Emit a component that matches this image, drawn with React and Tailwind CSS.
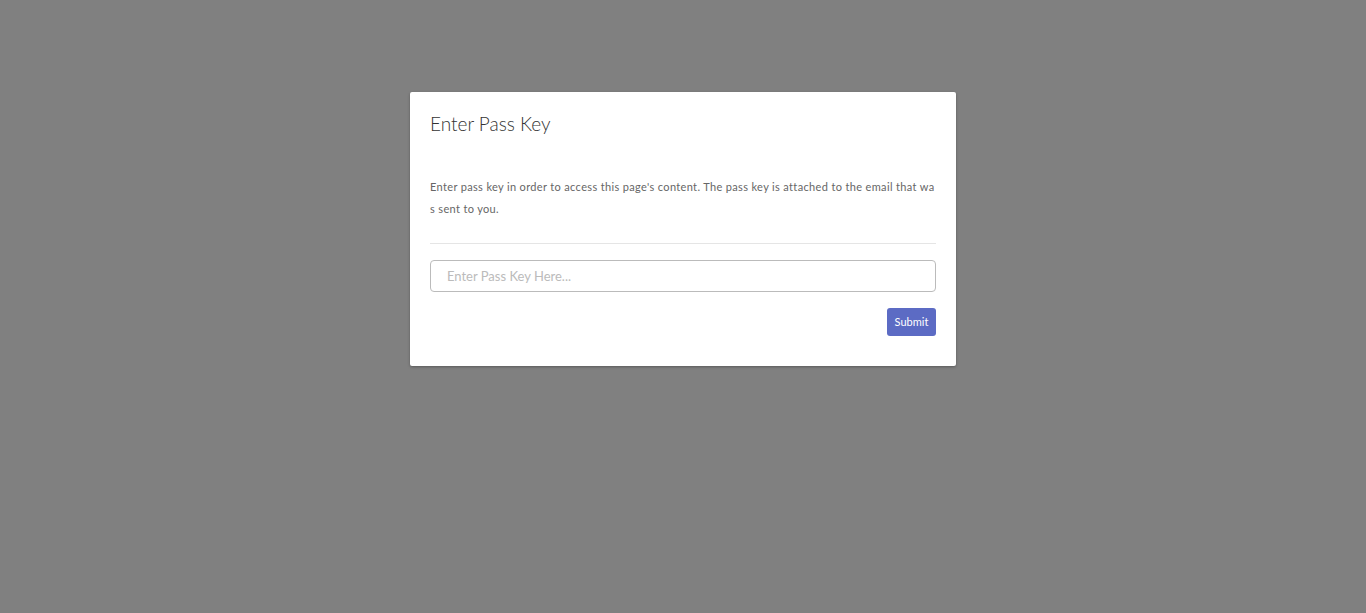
export default function App() {
  return (
    <div className="min-h-screen w-full bg-[#808080] pt-[92px] font-['Lato','Open_Sans',sans-serif]">
      <div className="mx-auto w-[546px] rounded-[2px] bg-white px-5 shadow-[0_1px_3px_rgba(0,0,0,0.3)]">
        <div className="pt-[22px] h-[84px]">
          <h4 className="text-[19px] font-light leading-[20px] text-[#333]">Enter Pass Key</h4>
        </div>
        <p className="break-all text-[11px] leading-[22px] tracking-[0.35px] text-[#666]">
          Enter pass key in order to access this page's content. The pass key is attached to the email that was sent to you.
        </p>
        <hr className="mt-[23px] border-t border-[#e5e5e5]" />
        <input
          type="text"
          placeholder="Enter Pass Key Here..."
          className="mt-4 block h-8 w-full rounded-[4px] border border-[#bbb] px-4 text-[13px] text-[#555] placeholder:text-[#bbb] outline-none"
        />
        <div className="flex justify-end pt-4 pb-[30px]">
          <button className="h-7 w-[49px] rounded-[3px] bg-[#5c6bc4] text-[11px] text-white">Submit</button>
        </div>
      </div>
    </div>
  );
}
